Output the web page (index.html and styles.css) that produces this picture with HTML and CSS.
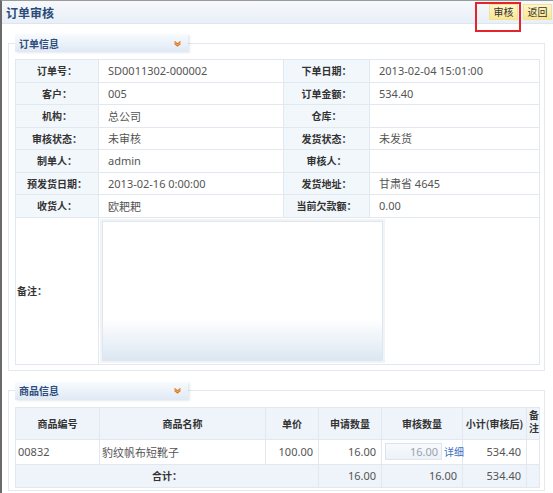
FILE: index.html
```html
<!DOCTYPE html>
<html>
<head lang="zh-CN">
  <meta charset="UTF-8">
  <title>订单审核</title>
  <link rel="stylesheet" href="styles.css">
</head>
<body>
  <div class="topbar">
    <h1 class="title">订单审核</h1>
    <div class="actions">
      <button class="btn">审核</button>
      <button class="btn">返回</button>
    </div>
    <span class="mark"></span>
  </div>

  <fieldset class="panel">
    <legend class="panel-tab">
      <span>订单信息</span>
      <svg class="chev" width="9" height="7" viewBox="0 0 9 7"><path d="M1.5 1.5 L4.5 4 L7.5 1.5 M1.5 3.5 L4.5 6 L7.5 3.5" fill="none" stroke="#e07a1f" stroke-width="1.3"/></svg>
    </legend>
    <table class="info">
      <colgroup>
        <col style="width:83px"><col style="width:185px"><col style="width:86px"><col>
      </colgroup>
      <tr>
        <th>订单号：</th><td>SD0011302-000002</td>
        <th>下单日期：</th><td>2013-02-04 15:01:00</td>
      </tr>
      <tr>
        <th>客户：</th><td>005</td>
        <th>订单金额：</th><td>534.40</td>
      </tr>
      <tr>
        <th>机构：</th><td>总公司</td>
        <th>仓库：</th><td></td>
      </tr>
      <tr>
        <th>审核状态：</th><td>未审核</td>
        <th>发货状态：</th><td>未发货</td>
      </tr>
      <tr>
        <th>制单人：</th><td>admin</td>
        <th>审核人：</th><td></td>
      </tr>
      <tr>
        <th>预发货日期：</th><td>2013-02-16 0:00:00</td>
        <th>发货地址：</th><td>甘肃省 4645</td>
      </tr>
      <tr>
        <th>收货人：</th><td>欧耙耙</td>
        <th>当前欠款额：</th><td>0.00</td>
      </tr>
      <tr class="remark">
        <th>备注：</th>
        <td colspan="3"><textarea class="memo"></textarea></td>
      </tr>
    </table>
  </fieldset>

  <fieldset class="panel goods-panel">
    <legend class="panel-tab">
      <span>商品信息</span>
      <svg class="chev" width="9" height="7" viewBox="0 0 9 7"><path d="M1.5 1.5 L4.5 4 L7.5 1.5 M1.5 3.5 L4.5 6 L7.5 3.5" fill="none" stroke="#e07a1f" stroke-width="1.3"/></svg>
    </legend>
    <table class="goods">
      <colgroup>
        <col style="width:84px"><col style="width:166px"><col style="width:53px">
        <col style="width:63px"><col style="width:81px"><col style="width:64px"><col>
      </colgroup>
      <tr class="head">
        <th>商品编号</th><th>商品名称</th><th>单价</th><th>申请数量</th>
        <th>审核数量</th><th>小计(审核后)</th><th class="note">备注</th>
      </tr>
      <tr class="row">
        <td>00832</td>
        <td>豹纹帆布短靴子</td>
        <td class="num">100.00</td>
        <td class="num">16.00</td>
        <td class="qty"><input class="qty-input" value="16.00"><a class="link">详细</a></td>
        <td class="num">534.40</td>
        <td></td>
      </tr>
      <tr class="sum">
        <th colspan="3">合计：</th>
        <td class="num">16.00</td>
        <td class="num">16.00</td>
        <td class="num">534.40</td>
        <td></td>
      </tr>
    </table>
  </fieldset>
</body>
</html>
```

FILE: styles.css
```css
* {
  margin: 0;
  padding: 0;
  box-sizing: border-box;
}
html, body {
  height: 100%;
}
body {
  border-left: 2px solid #6a6a6a;
  border-top: 1px solid #9a9a9a;
  background: #fff;
  font-family: "Noto Sans", "Noto Sans CJK SC", sans-serif;
  font-size: 11px;
  color: #444;
  overflow: hidden;
}

/* 顶部标题栏 */
.topbar {
  position: relative;
  height: 23px;
  display: flex;
  align-items: center;
  justify-content: space-between;
  padding: 0 1px 0 4px;
  background: linear-gradient(#f6f9fc, #e9eff7);
  border-bottom: 1px solid #dde6ef;
}
.title {
  font-size: 12px;
  font-weight: bold;
  color: #2b4b7a;
  font-family: "Noto Sans CJK SC", sans-serif;
}
.actions {
  display: flex;
  gap: 5px;
}
.btn {
  width: 29px;
  height: 16px;
  border: 1px solid #f1e2a0;
  background: linear-gradient(#fff6c8, #fbe68f);
  font-family: "Noto Sans CJK SC", sans-serif;
  font-size: 10px;
  line-height: 14px;
  color: #333;
}
.mark {
  position: absolute;
  left: 473px;
  top: 1px;
  width: 46px;
  height: 30px;
  border: 2px solid #e3242b;
}

/* 面板 */
.panel {
  margin: 10px 8px 0 6px;
  padding: 7px 4px 5px 6px;
  border: 1px solid #e2e9f0;
}
.goods-panel {
  margin-top: 11px;
  padding-bottom: 2px;
}
.panel-tab {
  width: 173px;
  height: 18px;
  display: flex;
  align-items: center;
  justify-content: space-between;
  padding: 0 6px 0 4px;
  background: linear-gradient(#f8fbfe, #dfe9f4);
  box-shadow: 2px 1px 2px rgba(90, 110, 140, 0.15);
  font-family: "Noto Sans CJK SC", sans-serif;
  font-size: 10px;
  font-weight: bold;
  color: #2e4d7b;
}
.chev {
  display: block;
}

/* 订单信息表 */
table {
  width: 525px;
  table-layout: fixed;
  border-collapse: collapse;
}
.info th, .info td {
  height: 22.5px;
  border: 1px solid #e1e8ef;
  padding: 0;
  white-space: nowrap;
}
.info th {
  background: #f2f7fc;
  font-weight: bold;
  color: #333;
  text-align: center;
  font-family: "Noto Sans CJK SC", sans-serif;
  font-size: 10px;
}
.info td {
  padding: 0 9px;
  color: #555;
}
.info .remark th {
  background: #fff;
  text-align: left;
  padding-left: 1px;
  height: 147px;
}
.info .remark td {
  padding: 2px 3px;
  vertical-align: middle;
}
.memo {
  display: block;
  width: 281px;
  height: 140px;
  resize: none;
  border: 1px solid #dfe6ee;
  outline: 2px solid #f1f4f7;
  background: linear-gradient(#fff 70%, #dce7f2);
}

/* 商品信息表 */
.goods th, .goods td {
  border: 1px solid #e1e8ef;
  padding: 0 2px;
  white-space: nowrap;
}
.goods th {
  font-family: "Noto Sans CJK SC", sans-serif;
  font-size: 10px;
  font-weight: bold;
  color: #333;
}
.goods .head th {
  height: 32px;
  background: #eef4fa;
}
.goods .head .note {
  white-space: normal;
  line-height: 13px;
  padding: 0 2px;
  vertical-align: top;
}
.goods .row td {
  height: 25px;
  color: #555;
}
.goods .sum th, .goods .sum td {
  height: 23px;
  background: #eef4fa;
}
.goods .num {
  text-align: right;
  padding-right: 5px;
  color: #555;
}
.goods .qty {
  padding: 0 3px;
  white-space: nowrap;
}
.qty-input {
  width: 57px;
  height: 17px;
  vertical-align: middle;
  border: 1px solid #dce5ee;
  background: linear-gradient(#f7fafd, #edf2f8);
  text-align: right;
  padding-right: 3px;
  font-family: "Noto Sans", sans-serif;
  font-size: 11px;
  color: #9aa3ad;
}
.link {
  margin-left: 2px;
  font-family: "Noto Sans CJK SC", sans-serif;
  font-size: 10px;
  color: #3b6fc1;
  vertical-align: middle;
}
```
